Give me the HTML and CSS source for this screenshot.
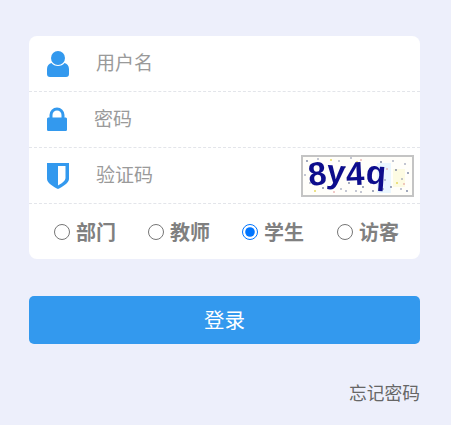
FILE: index.html
```html
<!DOCTYPE html>
<html lang="zh-CN">
<head>
<meta charset="utf-8">
<title>登录</title>
<link rel="stylesheet" href="styles.css">
</head>
<body>
<main class="login">
  <form class="card">
    <div class="row">
      <svg class="icon" viewBox="0 0 22 26" aria-hidden="true"><circle cx="11" cy="7" r="7"/><path d="M4.500 12C7 16 15 16 17.500 12C20 12.500 22 15 22 18V23C22 25 21 26 19 26H3C1 26 0 25 0 23V18C0 15 2 12.500 4.500 12Z"/></svg>
      <input class="field field-user" placeholder="用户名">
    </div>
    <div class="row">
      <svg class="icon" viewBox="0 0 22 26" aria-hidden="true"><path d="M2.500 11V8a7.500 7.500 0 0 1 15 0v3h-3V8a4.500 4.500 0 0 0-9 0v3z"/><path d="M2 10.500H18C19.500 10.500 20 11 20 12V22.500C20 23.500 19.500 24 18 24H2C.5 24 0 23.500 0 22.500V12C0 11 .5 10.500 2 10.500Z"/></svg>
      <input class="field field-pass" placeholder="密码">
    </div>
    <div class="row">
      <svg class="icon" viewBox="0 0 22 26" aria-hidden="true"><path fill-rule="evenodd" d="M0 0H22V16C22 20 15 24 11 26C7 24 0 20 0 16ZM11 3V22.500C14 21 18.500 18 18.500 15V3Z"/></svg>
      <input class="field field-code" placeholder="验证码">
      <div class="captcha">
        <svg class="noise" viewBox="0 0 113 42" aria-hidden="true">
          <rect x="2" y="2" width="109" height="38" fill="#fffefa"/>
          <rect x="76" y="8" width="14" height="30" fill="#eaf6ff"/>
          <rect x="92" y="14" width="12" height="18" fill="#fdfbe2"/>
          <g fill="#76809f">
            <circle cx="6" cy="6" r=".9"/><circle cx="17" cy="4" r=".8"/><circle cx="38" cy="6" r=".8"/><circle cx="44" cy="12" r=".9"/><circle cx="50" cy="3" r=".8"/><circle cx="62" cy="32" r=".9"/><circle cx="68" cy="26" r=".8"/><circle cx="72" cy="36" r=".9"/><circle cx="80" cy="7" r=".9"/><circle cx="92" cy="6" r=".8"/><circle cx="95" cy="15" r=".9"/><circle cx="104" cy="9" r=".8"/><circle cx="107" cy="18" r=".9"/><circle cx="101" cy="24" r=".8"/><circle cx="90" cy="32" r=".9"/><circle cx="100" cy="34" r=".8"/><circle cx="106" cy="36" r=".9"/><circle cx="9" cy="28" r=".8"/><circle cx="22" cy="33" r=".9"/><circle cx="40" cy="34" r=".8"/><circle cx="48" cy="28" r=".9"/><circle cx="55" cy="36" r=".8"/><circle cx="84" cy="25" r=".8"/><circle cx="4" cy="20" r=".8"/><circle cx="60" cy="37" r=".8"/><circle cx="45" cy="36" r=".8"/><circle cx="82" cy="34" r=".8"/>
          </g>
          <g fill="#e6d860">
            <circle cx="30" cy="5" r="1"/><circle cx="56" cy="7" r="1"/><circle cx="96" cy="28" r="1"/><circle cx="14" cy="36" r="1"/><circle cx="78" cy="34" r="1"/>
          </g>
          <g fill="#d88">
            <circle cx="60" cy="5" r=".8"/><circle cx="33" cy="37" r=".8"/><circle cx="86" cy="14" r=".8"/><circle cx="103" cy="29" r=".8"/>
          </g>
        </svg>
        <span class="captcha-text"><span class="ch ch-a">8</span><span class="ch ch-b">y</span><span class="ch ch-c">4</span><span class="ch ch-d">q</span></span>
      </div>
    </div>
    <div class="row roles">
      <label class="role"><input type="radio" name="role"><span>部门</span></label>
      <label class="role"><input type="radio" name="role"><span>教师</span></label>
      <label class="role"><input type="radio" name="role" checked><span>学生</span></label>
      <label class="role role-last"><input type="radio" name="role"><span>访客</span></label>
    </div>
  </form>
  <button class="submit" type="button">登录</button>
  <div class="links"><a class="forgot" href="#">忘记密码</a></div>
</main>
</body>
</html>
```
FILE: styles.css
```css
* { box-sizing: border-box; }
html, body { margin: 0; height: 100%; }
body {
  background: #edeffb;
  font-family: "Noto Sans CJK SC", "Noto Sans", sans-serif;
  overflow: hidden;
}
.login { width: 391px; margin-left: 29px; padding-top: 36px; }
.card {
  background: #fff;
  border-radius: 8px;
  height: 223px;
  display: flex;
  flex-direction: column;
}
.row {
  height: 56px;
  flex: none;
  display: flex;
  align-items: center;
  padding-left: 18px;
  border-bottom: 1px dashed #e3e5ea;
}
.row.roles { height: 55px; border-bottom: 0; padding-left: 25px; gap: 32px; }
.icon { width: 22px; height: 26px; fill: #3399ee; flex: none; }
.field {
  border: 0;
  outline: 0;
  background: transparent;
  font: inherit;
  font-size: 19px;
  height: 30px;
  padding: 0 0 4px;
  min-width: 0;
  flex: 1;
  color: #333;
}
.field::placeholder { color: #9a9a9a; opacity: 1; }
.field-user, .field-code { margin-left: 27px; }
.field-pass { margin-left: 25px; }
.captcha {
  position: relative;
  width: 113px;
  height: 42px;
  flex: none;
  margin-right: 6px;
  border: 2px solid #c4c4c4;
  background: #fffefa;
}
.noise { position: absolute; left: -2px; top: -2px; width: 113px; height: 42px; }
.captcha-text {
  position: relative;
  display: flex;
  font-family: "Liberation Sans", sans-serif;
  font-size: 33px;
  font-weight: 700;
  line-height: 34px;
  color: #0d0d8c;
  margin-left: 5px;
  filter: blur(.4px);
}
.ch { display: block; width: 19px; }
.ch-a { transform: rotate(-6deg); }
.ch-b { transform: translateY(-2px) rotate(5deg); }
.ch-c { transform: rotate(-3deg); }
.ch-d { transform: translate(1px, -1px) rotate(4deg); }
.role { display: flex; align-items: center; gap: 6px; }
.role-last { margin-left: 1px; }
.role input { width: 16px; height: 16px; margin: 0; flex: none; }
.role span { font-size: 20px; font-weight: 700; color: #808080; line-height: 1; }
.submit {
  display: block;
  width: 100%;
  height: 48px;
  margin-top: 37px;
  padding: 0 0 2px;
  border: 0;
  border-radius: 5px;
  background: #3399ee;
  color: #fff;
  font: inherit;
  font-size: 20.500px;
}
.links { text-align: right; margin-top: 35px; line-height: 26px; }
.forgot { color: #666; font-size: 17.750px; text-decoration: none; }
```
